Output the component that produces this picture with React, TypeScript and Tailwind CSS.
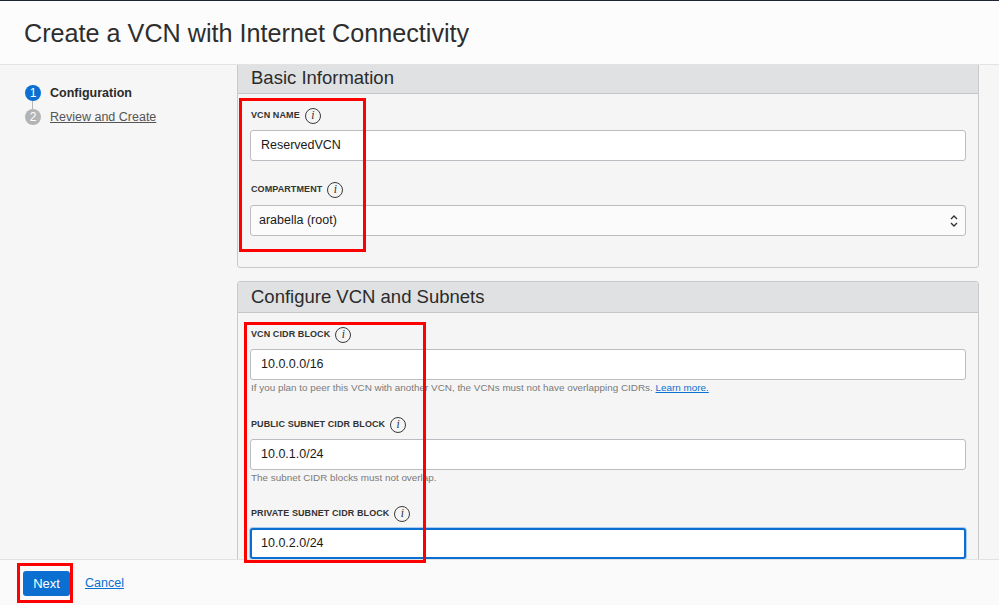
import React from "react";

function Info() {
  return (
    <span className="ml-[5px] inline-flex h-4 w-4 items-center justify-center rounded-full border border-[#3a3a3a] text-[11.5px] leading-none italic font-['Liberation_Serif',serif] text-[#2a2a2a]">
      i
    </span>
  );
}

function Label({ text }: { text: string }) {
  return (
    <div className="flex h-4 items-center pl-px">
      <span className="text-[9px] font-semibold uppercase tracking-[0.01em] text-[#333]">{text}</span>
      <Info />
    </div>
  );
}

function TextInput({ value, focused }: { value: string; focused?: boolean }) {
  return (
    <div
      className={
        focused
          ? "mt-[6px] flex h-[31px] items-center rounded-[3px] border-2 border-[#0a6fd0] bg-white pl-[9px] text-[12.5px] text-[#1a1a1a] shadow-[0_0_0_1px_rgba(80,150,230,0.45)]"
          : "mt-[6px] flex h-[31px] items-center rounded-[3px] border border-[#babdc1] bg-white pl-[10px] text-[12.5px] text-[#1a1a1a]"
      }
    >
      {value}
    </div>
  );
}

function Help({ children }: { children: React.ReactNode }) {
  return <div className="mt-[2px] pl-px text-[9.9px] leading-[12px] text-[#7a7a7a]">{children}</div>;
}

function PanelHeader({ title }: { title: string }) {
  return (
    <div className="flex h-[31px] items-center border-b border-[#c3c6c9] bg-[#dfe1e3] px-[13px] text-[18.5px] text-[#2b2b2b]">
      {title}
    </div>
  );
}

export default function App() {
  return (
    <div className="relative flex h-[605px] w-[999px] flex-col overflow-hidden bg-[#f6f6f6] font-['Liberation_Sans',Arial,sans-serif] text-[#333]">
      <div className="h-px bg-[#1c2733]" />
      <header className="flex h-[64px] items-center border-b border-[#e3e3e3] bg-[#fcfcfc] px-6 pt-[2px]">
        <h1 className="text-[25.2px] text-[#2e2e2e]">Create a VCN with Internet Connectivity</h1>
      </header>

      <div className="flex min-h-0 flex-1">
        <aside className="w-[237px] shrink-0 pl-[25px] pt-[20px]">
          <div className="flex h-4 items-center">
            <span className="flex h-4 w-4 items-center justify-center rounded-full bg-[#0a6fd0] text-[12px] text-white">1</span>
            <span className="ml-[9px] text-[12.5px] font-bold text-[#2a2a2a]">Configuration</span>
          </div>
          <div className="ml-[7px] h-2 w-px bg-[#b5b5b5]" />
          <div className="flex h-4 items-center">
            <span className="flex h-4 w-4 items-center justify-center rounded-full bg-[#b4b4b4] text-[12px] text-white">2</span>
            <span className="ml-[9px] text-[12.5px] text-[#555] underline">Review and Create</span>
          </div>
        </aside>

        <main className="min-w-0 flex-1 overflow-hidden pr-5">
          <section className="-mt-[3px] rounded-[3px] border border-[#c7c9cc] bg-[#f5f5f5]">
            <PanelHeader title="Basic Information" />
            <div className="px-3 pb-[31px] pt-[14px]">
              <Label text="VCN Name" />
              <TextInput value="ReservedVCN" />
              <div className="mt-[21px]">
                <Label text="Compartment" />
                <div className="mt-[7px] flex h-[31px] items-center justify-between rounded-[3px] border border-[#babdc1] bg-[#fbfbfb] pl-[8px] pr-[7px] text-[12.5px] text-[#1a1a1a]">
                  <span>arabella (root)</span>
                  <svg width="8" height="14" viewBox="0 0 8 14" fill="none" stroke="#333" strokeWidth="1.4">
                    <path d="M1 5 L4 2 L7 5" />
                    <path d="M1 9 L4 12 L7 9" />
                  </svg>
                </div>
              </div>
            </div>
          </section>

          <section className="mt-[13px] rounded-[3px] border border-[#c7c9cc] bg-[#f5f5f5]">
            <PanelHeader title="Configure VCN and Subnets" />
            <div className="px-3 pb-8 pt-[14px]">
              <Label text="VCN CIDR Block" />
              <TextInput value="10.0.0.0/16" />
              <Help>
                If you plan to peer this VCN with another VCN, the VCNs must not have overlapping CIDRs.{" "}
                <span className="text-[#0a6fd0] underline">Learn more.</span>
              </Help>
              <div className="mt-[23px]">
                <Label text="Public Subnet CIDR Block" />
                <TextInput value="10.0.1.0/24" />
                <Help>The subnet CIDR blocks must not overlap.</Help>
              </div>
              <div className="mt-[22px]">
                <Label text="Private Subnet CIDR Block" />
                <TextInput value="10.0.2.0/24" focused />
              </div>
            </div>
          </section>
        </main>
      </div>

      <footer className="flex h-[46px] shrink-0 items-center border-t border-[#e2e2e2] bg-[#fafafa] pl-[23px] pt-[2px]">
        <button className="h-[25px] w-[47px] rounded-[3px] bg-[#0a6fd0] text-[13px] text-white">Next</button>
        <span className="ml-[15px] text-[12.5px] text-[#0a6fd0] underline">Cancel</span>
      </footer>

      <div className="pointer-events-none absolute left-[239px] top-[98px] h-[154px] w-[127px] border-[3px] border-[#f00]" />
      <div className="pointer-events-none absolute left-[244px] top-[322px] h-[241px] w-[182px] border-[3px] border-[#f00]" />
      <div className="pointer-events-none absolute left-[17px] top-[563px] h-[40px] w-[56px] border-[3px] border-[#f00]" />
    </div>
  );
}
